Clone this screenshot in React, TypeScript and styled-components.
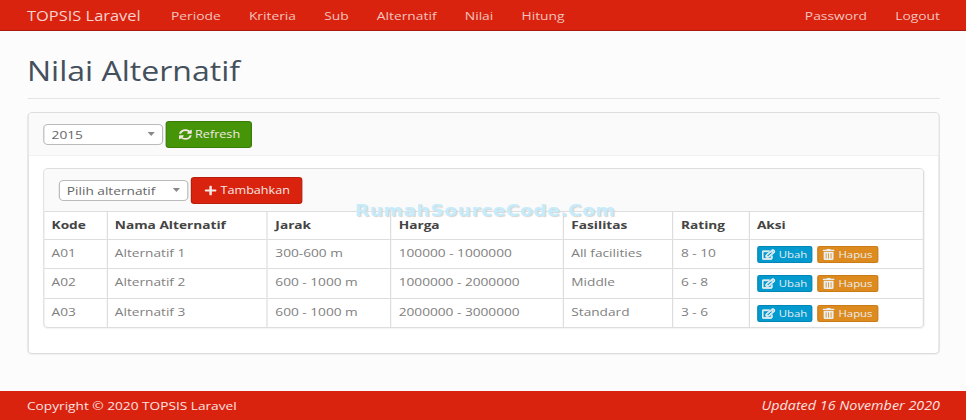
import styled, {createGlobalStyle} from 'styled-components';
import {FaPlus, FaRegEdit, FaSyncAlt, FaTrashAlt} from 'react-icons/fa';

const GlobalStyle = createGlobalStyle`
    html, body {
        margin: 0;
        padding: 0;
        height: 420px;
        overflow: hidden;
    }
    body {
        background-color: #fcfcfc;
        font-family: "Open Sans", "Liberation Sans", sans-serif;
        font-size: 11.4px;
        color: #777;
    }
`;

// the reference is a screenshot stretched sideways, so the page is laid out at 805px and widened
const Page = styled.div`
    position: relative;
    display: flex;
    flex-direction: column;
    width: 805px;
    height: 420px;
    transform: scaleX(1.2);
    transform-origin: 0 0;
`;

const Navbar = styled.nav`
    box-sizing: border-box;
    height: 31px;
    flex-shrink: 0;
    background-color: #d9230f;
    border-bottom: 1px solid #a91b0c;
    display: flex;
    align-items: center;
    padding: 0 21.7px 0 22.5px;
`;

const Brand = styled.span`
    font-size: 13.7px;
    color: #f6d2cd;
    margin-right: 25.3px;
`;

const NavLink = styled.a`
    font-size: 11.5px;
    color: #f3c4be;
    margin-right: 23.5px;

    &:last-child {
        margin-right: 0;
    }
`;

const NavRight = styled.div`
    margin-left: auto;
    display: flex;
`;

const Main = styled.main`
    flex: 1;
    padding: 0 21.7px 0 23.3px;
`;

const Title = styled.h1`
    margin: 0 0 13px;
    padding: 23px 0 10px;
    height: 34px;
    line-height: 34px;
    font-size: 26.7px;
    font-weight: 400;
    color: #44505c;
    text-indent: -0.8px;
    border-bottom: 1px solid #e4e4e4;
`;

const Panel = styled.section`
    box-sizing: border-box;
    height: 242px;
    background-color: #fff;
    border: 1px solid #ddd;
    border-radius: 4px;
    box-shadow: 0 1px 1px rgba(0, 0, 0, 0.05);
`;

const PanelHeading = styled.div`
    box-sizing: border-box;
    height: 43px;
    background-color: #fafafa;
    border-bottom: 1px solid #f1f1f1;
    border-radius: 3px 3px 0 0;
    display: flex;
    align-items: center;
    gap: 2.5px;
    padding: 0 11.7px;
`;

const PanelBody = styled.div`
    padding: 12px 12.5px 0 11.7px;
`;

const InnerPanel = styled.div`
    border: 1px solid #ddd;
    border-radius: 4px;
    box-shadow: 0 1px 1px rgba(0, 0, 0, 0.05);
`;

const InnerHeading = styled.div`
    box-sizing: border-box;
    height: 42px;
    background-color: #fafafa;
    display: flex;
    align-items: center;
    gap: 2.5px;
    padding: 0 11.7px;
    border-radius: 3px 3px 0 0;
`;

const SelectBox = styled.div<{ $width: number }>`
    box-sizing: border-box;
    width: ${({$width}) => $width}px;
    height: 21px;
    background-color: #fff;
    border: 1px solid #bbb;
    border-radius: 4px;
    display: flex;
    align-items: center;
    justify-content: space-between;
    padding: 0 6px 0 6px;
    color: #666;
`;

const Caret = styled.span`
    width: 0;
    height: 0;
    border-left: 3.5px solid transparent;
    border-right: 3.5px solid transparent;
    border-top: 4px solid #888;
`;

const Button = styled.button<{ $bg: string; $border: string; $width: number }>`
    box-sizing: border-box;
    width: ${({$width}) => $width}px;
    height: 27px;
    background-color: ${({$bg}) => $bg};
    border: 1px solid ${({$border}) => $border};
    border-radius: 3px;
    color: #f4e9e4;
    font-family: inherit;
    font-size: 10.5px;
    padding: 0;
    display: inline-flex;
    align-items: center;
    justify-content: center;
    gap: 3px;
`;

const Table = styled.table`
    width: 100%;
    border-collapse: collapse;
    table-layout: fixed;
`;

const Th = styled.th<{ $width?: number }>`
    box-sizing: border-box;
    width: ${({$width}) => ($width ? `${$width}px` : 'auto')};
    height: 28px;
    padding: 0 6px 2px;
    text-align: left;
    font-weight: 700;
    color: #444;
    border-top: 1px solid #ddd;
    border-left: 1px solid #ddd;

    &:first-child {
        border-left: 0;
    }
`;

const Td = styled.td`
    box-sizing: border-box;
    height: 29.33px;
    padding: 0 6px 4px;
    color: #808080;
    border-top: 1px solid #ddd;
    border-left: 1px solid #ddd;
    white-space: nowrap;

    &:first-child {
        border-left: 0;
    }
`;

const Actions = styled.div`
    display: flex;
    gap: 3.3px;
    padding-top: 5px;
`;

const SmallButton = styled.button<{ $bg: string; $border: string; $width: number }>`
    box-sizing: border-box;
    width: ${({$width}) => $width}px;
    height: 17px;
    background-color: ${({$bg}) => $bg};
    border: 1px solid ${({$border}) => $border};
    border-radius: 2px;
    color: #e9eef0;
    font-family: inherit;
    font-size: 9.5px;
    padding: 0;
    display: inline-flex;
    align-items: center;
    justify-content: center;
    gap: 2.5px;
`;

const EditIcon = styled(FaRegEdit)`
    stroke: currentColor;
    stroke-width: 40;
`;

const Watermark = styled.div`
    position: absolute;
    left: 295.8px;
    top: 204px;
    font-family: "DejaVu Sans", sans-serif;
    font-size: 15.5px;
    font-weight: 700;
    line-height: 14px;
    letter-spacing: 0.45px;
    color: #c6ecfb;
    text-shadow: 1px 1px 1px #d5d5d5;
    white-space: nowrap;
`;

const Footer = styled.footer`
    box-sizing: border-box;
    height: 29px;
    flex-shrink: 0;
    background-color: #d9230f;
    color: #fbe4e1;
    display: flex;
    align-items: center;
    justify-content: space-between;
    padding: 0 21.7px 0 22.5px;
`;

const Updated = styled.em`
    font-style: italic;
    font-size: 11.95px;
`;

const rows = [
    {kode: 'A01', nama: 'Alternatif 1', jarak: '300-600 m', harga: '100000 - 1000000', fasilitas: 'All facilities', rating: '8 - 10'},
    {kode: 'A02', nama: 'Alternatif 2', jarak: '600 - 1000 m', harga: '1000000 - 2000000', fasilitas: 'Middle', rating: '6 - 8'},
    {kode: 'A03', nama: 'Alternatif 3', jarak: '600 - 1000 m', harga: '2000000 - 3000000', fasilitas: 'Standard', rating: '3 - 6'},
];

const navItems = ['Periode', 'Kriteria', 'Sub', 'Alternatif', 'Nilai', 'Hitung'];

export default function App() {
    return (
        <Page>
            <GlobalStyle/>
            <Navbar>
                <Brand>TOPSIS Laravel</Brand>
                {navItems.map((item) => <NavLink key={item}>{item}</NavLink>)}
                <NavRight>
                    <NavLink>Password</NavLink>
                    <NavLink>Logout</NavLink>
                </NavRight>
            </Navbar>
            <Main>
                <Title>Nilai Alternatif</Title>
                <Panel>
                    <PanelHeading>
                        <SelectBox $width={100}>2015<Caret/></SelectBox>
                        <Button $bg="#469408" $border="#3a7d06" $width={71.7}><FaSyncAlt size={11}/>Refresh</Button>
                    </PanelHeading>
                    <PanelBody>
                        <InnerPanel>
                            <InnerHeading>
                                <SelectBox $width={108.3}>Pilih alternatif<Caret/></SelectBox>
                                <Button $bg="#d9230f" $border="#b81e0d" $width={92.5}><FaPlus size={11}/>Tambahkan</Button>
                            </InnerHeading>
                            <Table>
                                <thead>
                                    <tr>
                                        <Th $width={52.2}>Kode</Th>
                                        <Th $width={133.8}>Nama Alternatif</Th>
                                        <Th $width={102.8}>Jarak</Th>
                                        <Th $width={143.8}>Harga</Th>
                                        <Th $width={91.4}>Fasilitas</Th>
                                        <Th $width={63.3}>Rating</Th>
                                        <Th>Aksi</Th>
                                    </tr>
                                </thead>
                                <tbody>
                                    {rows.map((row) => (
                                        <tr key={row.kode}>
                                            <Td>{row.kode}</Td>
                                            <Td>{row.nama}</Td>
                                            <Td>{row.jarak}</Td>
                                            <Td>{row.harga}</Td>
                                            <Td>{row.fasilitas}</Td>
                                            <Td>{row.rating}</Td>
                                            <Td>
                                                <Actions>
                                                    <SmallButton $bg="#029acf" $border="#0286b5" $width={46.7}><EditIcon size={11}/>Ubah</SmallButton>
                                                    <SmallButton $bg="#dd8a1f" $border="#c97c18" $width={50.8}><FaTrashAlt size={11}/>Hapus</SmallButton>
                                                </Actions>
                                            </Td>
                                        </tr>
                                    ))}
                                </tbody>
                            </Table>
                        </InnerPanel>
                    </PanelBody>
                </Panel>
            </Main>
            <Watermark>RumahSourceCode.Com</Watermark>
            <Footer>
                <span>Copyright © 2020 TOPSIS Laravel</span>
                <Updated>Updated 16 November 2020</Updated>
            </Footer>
        </Page>
    );
}
